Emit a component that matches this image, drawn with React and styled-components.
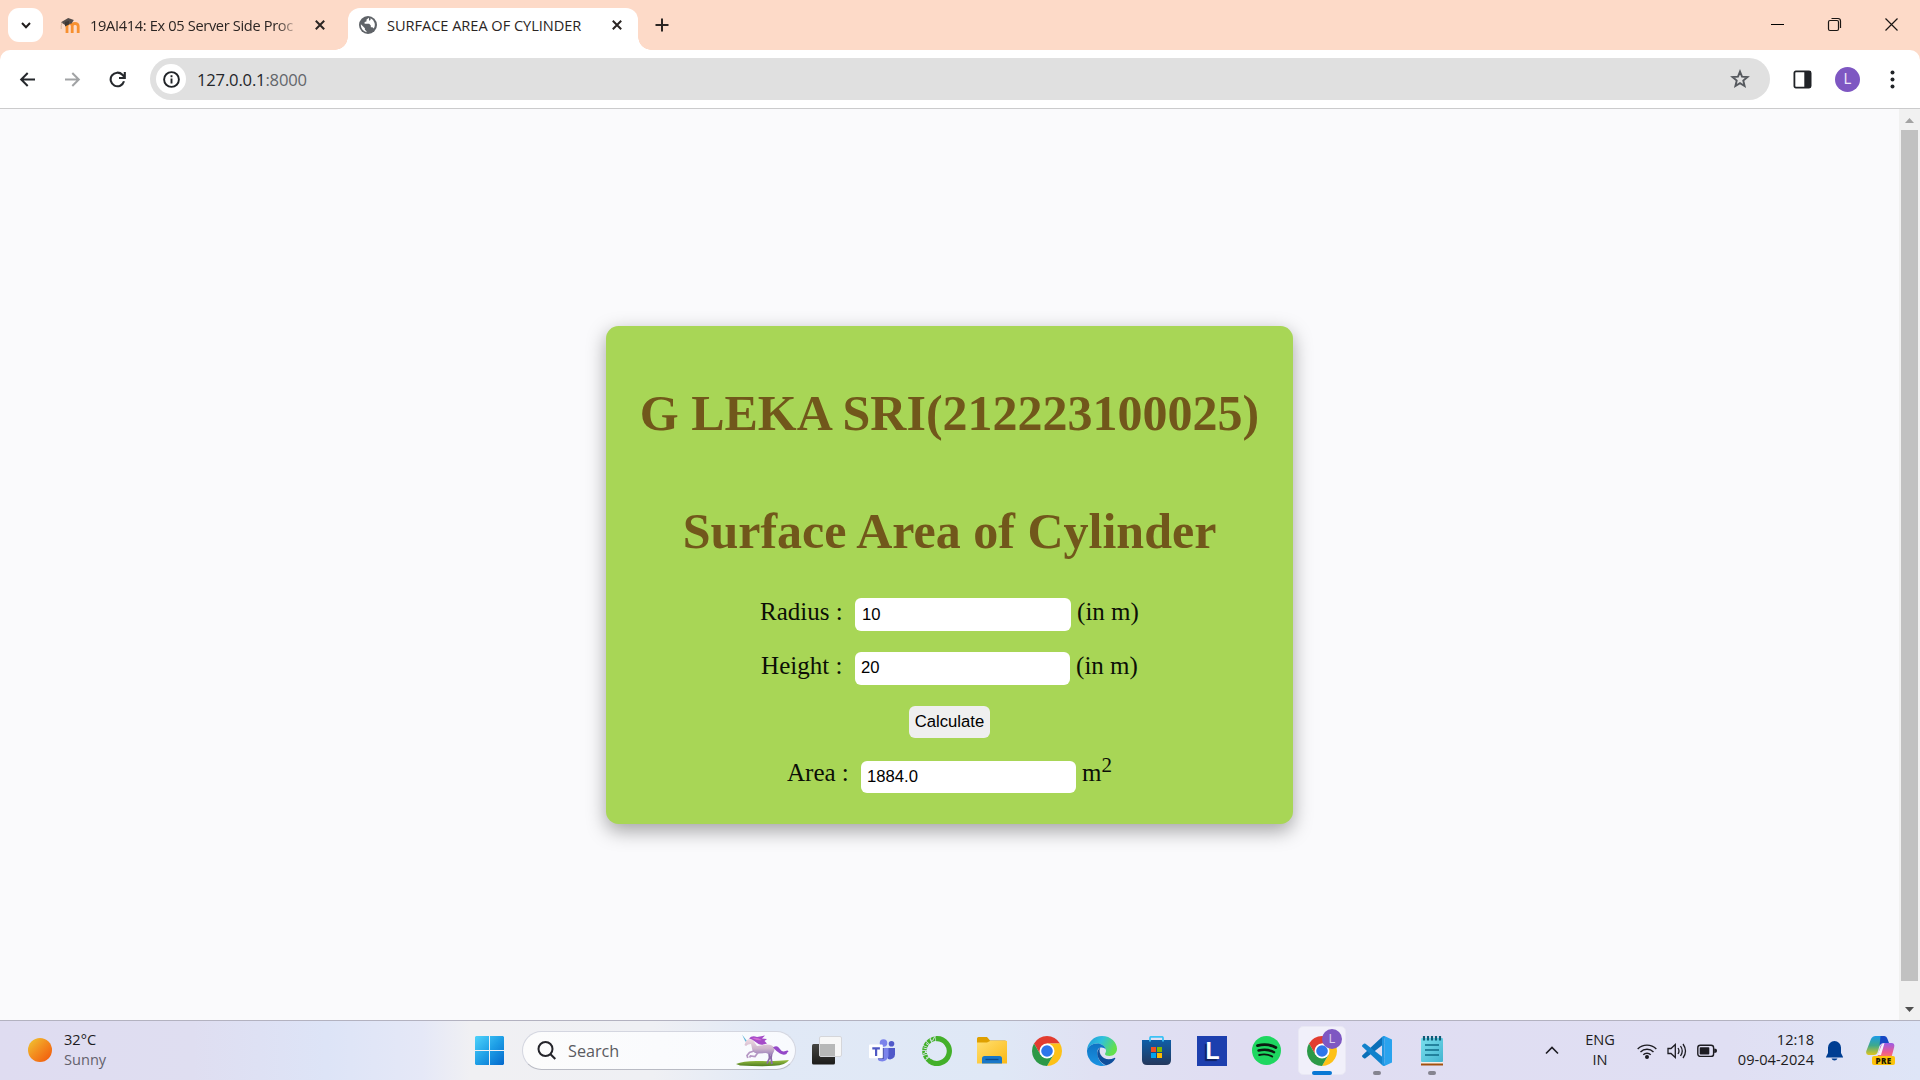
import React from "react";
import styled, { createGlobalStyle, css } from "styled-components";

const Global = createGlobalStyle`
  * { box-sizing: border-box; }
  html, body { margin: 0; padding: 0; background: #fafafc; overflow: hidden; }
  svg { display: block; flex: none; }
`;

const ui = `"Open Sans", "Noto Sans", sans-serif`;

const Screen = styled.div`
  width: 1920px;
  height: 1080px;
  display: flex;
  flex-direction: column;
  font-family: ${ui};
  overflow: hidden;
`;

/* ---------- tab strip ---------- */
const TabStrip = styled.div`
  height: 50px;
  flex: none;
  display: flex;
  align-items: flex-start;
  background: #fddac8;
`;
const TabSearch = styled.div`
  width: 35px;
  height: 34px;
  margin: 8px 0 0 8px;
  border-radius: 11px;
  background: #fff;
  display: flex;
  align-items: center;
  justify-content: center;
`;
const Tab = styled.div`
  position: relative;
  height: 42px;
  margin-top: 8px;
  width: ${(p) => p.$width}px;
  padding-left: ${(p) => p.$pad}px;
  padding-right: ${(p) => p.$right}px;
  padding-bottom: 8px;
  display: flex;
  align-items: center;
  ${(p) =>
    p.$active &&
    css`
      background: #fff;
      border-radius: 12px 12px 0 0;
      &::before,
      &::after {
        content: "";
        position: absolute;
        bottom: 0;
        width: 13px;
        height: 13px;
      }
      &::before {
        left: -13px;
        background: radial-gradient(circle at 0 0, transparent 12.5px, #fff 13px);
      }
      &::after {
        right: -13px;
        background: radial-gradient(circle at 100% 0, transparent 12.5px, #fff 13px);
      }
    `}
`;
const TabTitle = styled.span`
  flex: 1;
  margin-left: ${(p) => p.$gap}px;
  margin-right: ${(p) => p.$after}px;
  overflow: hidden;
  white-space: nowrap;
  font-size: 14.6px;
  line-height: 22px;
  letter-spacing: ${(p) => p.$track}px;
  color: #2b2523;
  ${(p) => p.$fade && css`mask-image: linear-gradient(to right, #000 90%, rgba(0, 0, 0, 0.15));`}
`;
const NewTab = styled.div`
  margin: 18px 0 0 17px;
`;
const WindowButtons = styled.div`
  margin: 17px 21px 0 auto;
  display: flex;
  gap: 42px;
`;

/* ---------- toolbar ---------- */
const ToolbarBack = styled.div`
  flex: none;
  background: #fddac8;
`;
const Toolbar = styled.div`
  height: 59px;
  background: #fff;
  border-radius: 10px 10px 0 0;
  border-bottom: 1px solid #cbcbcc;
  display: flex;
  align-items: center;
  padding: 0 20px 0 19px;
`;
const NavButtons = styled.div`
  display: flex;
  gap: 28px;
  width: 131px;
`;
const AddressBar = styled.div`
  width: 1620px;
  height: 42px;
  border-radius: 21px;
  background: #e0e0e0;
  display: flex;
  align-items: center;
  padding: 0 20px 0 6px;
`;
const SiteInfo = styled.div`
  width: 30px;
  height: 30px;
  border-radius: 50%;
  background: #fff;
  display: flex;
  align-items: center;
  justify-content: center;
`;
const Url = styled.span`
  flex: 1;
  margin-left: 11px;
  font-size: 16.6px;
  letter-spacing: -0.18px;
  color: #24262a;
`;
const Port = styled.span`
  color: #63666b;
`;
const ToolbarActions = styled.div`
  flex: 1;
  display: flex;
  align-items: center;
  padding: 0 5px 0 23px;
`;
const Avatar = styled.div`
  width: 25px;
  height: 25px;
  margin: 0 auto 0 23px;
  border-radius: 50%;
  background: #7e57c2;
  color: #efe8fa;
  font: 14px/25px Roboto, sans-serif;
  text-align: center;
`;

/* ---------- page ---------- */
const Viewport = styled.div`
  flex: 1;
  display: flex;
  background: #fafafc;
`;
const Page = styled.main`
  flex: 1;
  display: flex;
  justify-content: center;
  padding-top: 217px;
`;
const Card = styled.section`
  width: 687px;
  height: 498px;
  padding-top: 58px;
  border-radius: 12.5px;
  background: #a8d656;
  box-shadow: 0 6.25px 18.75px rgba(0, 0, 0, 0.35);
  display: flex;
  flex-direction: column;
  align-items: center;
  font-family: "Liberation Serif", serif;
`;
const Heading = styled.h1`
  margin: 0 0 ${(p) => p.$below}px;
  font-size: 50px;
  line-height: 58px;
  font-weight: 700;
  color: #71571b;
  white-space: nowrap;
`;
const Row = styled.div`
  display: flex;
  align-items: flex-start;
  justify-content: center;
  height: ${(p) => p.$height}px;
  margin-bottom: 21px;
`;
const Label = styled.label`
  width: ${(p) => p.$width}px;
  font-size: 25px;
  line-height: ${(p) => p.$line || 27}px;
  color: #0c0f06;
  white-space: nowrap;
`;
const Field = styled.input`
  width: ${(p) => p.$width}px;
  height: 100%;
  border: 0;
  border-radius: 6px;
  outline: none;
  padding: 0 6px ${(p) => p.$lift || 0}px ${(p) => p.$inset || 6}px;
  background: #fff;
  color: #000;
  font: 16.67px "Liberation Sans", sans-serif;
`;
const Unit = styled.span`
  margin-left: 6px;
  font-size: 25px;
  line-height: ${(p) => p.$line || 27}px;
  color: #0c0f06;
`;
const Power = styled.sup`
  font-size: 21px;
  line-height: 0;
  vertical-align: 9px;
`;
const Calculate = styled.button`
  width: 81px;
  height: 32px;
  border: 0;
  padding: 0;
  margin: 0 0 23px;
  border-radius: 6px;
  background: #efefef;
  color: #000;
  font: 16.67px "Liberation Sans", sans-serif;
`;

const Scrollbar = styled.div`
  width: 21px;
  background: #f1f1f1;
  display: flex;
  flex-direction: column;
  align-items: center;
`;
const ScrollArrow = styled.div`
  width: 21px;
  height: ${(p) => p.$height}px;
  padding: ${(p) => p.$pad}px 0 0 6px;
`;
const Thumb = styled.div`
  width: 17px;
  height: 851px;
  background: #c1c1c1;
`;

/* ---------- taskbar ---------- */
const Taskbar = styled.footer`
  height: 60px;
  flex: none;
  border-top: 1px solid #b3b2c0;
  display: flex;
  align-items: center;
  padding: 0 25px 0 28px;
  background: linear-gradient(
    90deg,
    #dfdcf1 0%,
    #dfdef1 10%,
    #dde4f7 17%,
    #e5e8f7 22%,
    #f0f0f3 24.5%,
    #eff0f4 34%,
    #e1e9f6 40%,
    #dfe8f6 52%,
    #e0e1f3 57%,
    #e0ddf2 65%,
    #e0dff3 90%,
    #dfe4f6 98%,
    #dee5f7 100%
  );
`;
const Weather = styled.div`
  display: flex;
  align-items: center;
  width: 447px;
  height: 59px;
`;
const Sun = styled.div`
  width: 24px;
  height: 24px;
  margin: -2px 12px 0 0;
  border-radius: 50%;
  background: linear-gradient(135deg, #f0c030 8%, #f39020 45%, #f26410 85%);
`;
const Lines = styled.div`
  display: flex;
  flex-direction: column;
  width: ${(p) => p.$width || "auto"};
  text-align: ${(p) => p.$align || "left"};
  font-size: 14.6px;
  line-height: 20px;
  color: #1d1c22;
  white-space: nowrap;
  padding-bottom: 4px;
`;
const Muted = styled.span`
  color: #63616c;
`;
const Search = styled.div`
  width: 274px;
  height: 39px;
  margin: 0 3px 0 18px;
  border-radius: 20px;
  border: 1px solid #d4d6e0;
  border-bottom-color: #b9bbc4;
  background: linear-gradient(90deg, #fcfcfc, #f8fafe);
  display: flex;
  align-items: center;
  padding: 0 5px 0 14px;
`;
const SearchText = styled.span`
  flex: 1;
  margin-left: 12px;
  font-size: 16.2px;
  color: #5a5a60;
`;
const Apps = styled.div`
  display: flex;
`;
const AppSlot = styled.div`
  position: relative;
  width: 55px;
  height: 49px;
  display: flex;
  align-items: center;
  justify-content: center;
`;
const ActiveTile = styled.div`
  width: 48px;
  height: 49px;
  border-radius: 5px;
  border: 1px solid #e9e8f4;
  background: #f1f0fa;
  display: flex;
  align-items: center;
  justify-content: center;
`;
const Badge = styled.div`
  position: absolute;
  left: 28px;
  top: 3px;
  width: 20px;
  height: 20px;
  border-radius: 50%;
  background: #7e57c2;
  color: #d9ccf0;
  font: 12px/20px Roboto, sans-serif;
  text-align: center;
`;
const Marker = styled.div`
  position: absolute;
  bottom: 0;
  width: ${(p) => (p.$active ? 20 : 8)}px;
  height: 4px;
  border-radius: 2px;
  background: ${(p) => (p.$active ? "#0a78d4" : "#858490")};
`;
const LetterTile = styled.div`
  width: 30px;
  height: 30px;
  background: #1d3fae;
  color: #fff;
  font: 700 23px/30px "Liberation Sans", sans-serif;
  text-align: center;
  text-shadow: -2px 2px 1px #0f2060;
  padding-left: 2px;
`;
const Tray = styled.div`
  margin-left: auto;
  display: flex;
  align-items: center;
`;
const Language = styled(Lines)`
  margin: 0 17px 0 21px;
`;
const Glyphs = styled.div`
  display: flex;
  gap: 10px;
`;
const Bell = styled.div`
  margin: 0 23px 0 12px;
`;
const Copilot = styled.div`
  position: relative;
  width: 29px;
  height: 29px;
`;
const Pre = styled.span`
  position: absolute;
  left: 6px;
  bottom: 0;
  width: 23px;
  height: 9px;
  border-radius: 2px;
  background: #fcc30b;
  color: #221a00;
  font: 800 8px/9px "Open Sans", sans-serif;
  letter-spacing: 0.4px;
  text-align: center;
`;

/* ---------- icons ---------- */
const Cross = () => (
  <svg width="10" height="10" viewBox="0 0 10 10">
    <path d="M.8.8l8.4 8.4M9.2.8L.8 9.2" stroke="#2b2523" strokeWidth="2" />
  </svg>
);
const Moodle = () => (
  <svg width="21" height="17" viewBox="0 0 21 17">
    <path d="M7 16V9Q7 6.500 9.600 6.500T12.200 9V16M12.200 16V9Q12.200 6.500 15 6.500T18.200 9V16" fill="none" stroke="#f7902f" strokeWidth="2.800" />
    <path d="M1 5.200L8.200 1l5.600 2L11.600 6.600 5 8z" fill="#544c4a" />
    <path d="M5 5v4.500l4-2V4z" fill="#3e3836" />
    <path d="M2 5.600Q.8 8.500 1.200 12" stroke="#d9b49a" fill="none" />
  </svg>
);
const Globe = () => (
  <svg width="18" height="18" viewBox="0 0 18 18">
    <circle cx="9" cy="9" r="9" fill="#5f6368" />
    <path d="M10 1.800L7.600 3.600 7.400 5.500 5.600 6v1.800h4.600l1.600 1.800v1.600h1.600l1.400 1.300A7.200 7.200 0 0 0 11.600 2.300L11.500 4 10 4.700zM1.900 8.300l4 3.900v1.600l1.600 1.400v1A7.200 7.200 0 0 1 1.900 8.300z" fill="#fff" />
  </svg>
);
const Chrome = () => (
  <svg width="30" height="30" viewBox="0 0 48 48">
    <path d="M3.220 12A24 24 0 0 1 44.780 12H24L13.610 30Z" fill="#e23c30" />
    <path d="M44.780 12A24 24 0 0 1 24 48L34.390 30 24 12Z" fill="#fdc117" />
    <path d="M3.220 12A24 24 0 0 0 24 48L34.390 30H13.610Z" fill="#2c9947" />
    <circle cx="24" cy="24" r="12" fill="#fff" />
    <circle cx="24" cy="24" r="9.300" fill="#2d76ea" />
  </svg>
);
const Windows = () => (
  <svg width="29" height="29" viewBox="0 0 29 29">
    <defs>
      <linearGradient id="win" x1="0" y1="0" x2="29" y2="29" gradientUnits="userSpaceOnUse">
        <stop stopColor="#4fd3fb" />
        <stop offset=".5" stopColor="#1e9fe6" />
        <stop offset="1" stopColor="#0468cc" />
      </linearGradient>
    </defs>
    <path d="M1 0h13v14H0V1zM15 0h13l1 1v13H15zM0 15h14v14H1l-1-1zM15 15h14v13l-1 1H15z" fill="url(#win)" />
  </svg>
);
const Unicorn = () => (
  <svg width="54" height="33" viewBox="0 0 54 33">
    <defs>
      <linearGradient id="grass" x1="0" x2="0" y1="0" y2="1">
        <stop stopColor="#9cc242" />
        <stop offset="1" stopColor="#4f7d22" />
      </linearGradient>
      <linearGradient id="body" x1="0" x2="0" y1="0" y2="1">
        <stop stopColor="#efdbe2" />
        <stop offset=".6" stopColor="#cdb4cc" />
        <stop offset="1" stopColor="#9a7fba" />
      </linearGradient>
    </defs>
    <path d="M0 30Q8 26.500 24 27T53 26Q50 31 38 31.800T4 31.500Z" fill="url(#grass)" />
    <path d="M6 .5l5 6.500-1.500.8z" fill="#5fb4d8" />
    <path d="M33 18l.5 6-2.500 5.500M36 17l-1 7 1 6" fill="none" stroke="#8d6cab" strokeWidth="1.800" />
    <path d="M10 7l2.500-2 4 .5 4.500 6.500 10-1.500q6 0 7.500 4 0 4-3.500 6.500l-5-2-8 .5q-4 0-5.500-3l-1.500-6.500-3 .5-2 1.500-1.500-1z" fill="url(#body)" />
    <path d="M18 17l-4.500 1.500-2.500 3 .8 2.500M22 18.500l-3 4-4.500-.5-1 1.500" fill="none" stroke="#b597c4" strokeWidth="1.700" />
    <path d="M13 4.500Q16 1 21 3L29 1.500 26 4.500l5 .5-2.500 2 2.500 2.500q-5 2-8.500.5L16 5.500z" fill="#a54bc8" />
    <path d="M16 4q5-1 10 2-4 1-8-1z" fill="#d16ad4" />
    <path d="M37 13.500q4-3 6.500 1t6 2.500q2.500-1 3 .5-1.500.5-2 2.500-3 1.500-6.500-.5T37 13.500z" fill="#9448c8" />
  </svg>
);
const TaskView = () => (
  <svg width="30" height="29" viewBox="0 0 30 29">
    <defs>
      <linearGradient id="tv" x1="0" x2="0" y1="0" y2="1">
        <stop stopColor="#454543" />
        <stop offset="1" stopColor="#1c1c1a" />
      </linearGradient>
    </defs>
    <rect y="8" width="23" height="20.500" rx="1.500" fill="url(#tv)" />
    <rect x="7.500" y=".5" width="22" height="20" rx="1.500" fill="#f7f7f7" stroke="#d5d6da" />
    <path d="M8 8h15v12H8z" fill="#b7b8b8" />
  </svg>
);
const Teams = () => (
  <svg width="26" height="24" viewBox="0 0 26 24">
    <circle cx="14.500" cy="4" r="3.800" fill="#7b83eb" />
    <circle cx="22.500" cy="4.800" r="2.800" fill="#5059c9" />
    <path d="M17 9h9v6.500a5 5 0 0 1-7 4.500z" fill="#5059c9" />
    <path d="M8 9h11.500v8A6.500 6.500 0 0 1 9 21z" fill="#7b83eb" />
    <path d="M10 9h5v11h-6z" fill="#40478f" opacity=".6" />
    <rect y="5.500" width="13.800" height="13.800" rx="1" fill="#fff" />
    <path d="M3.300 8.300h7.600v2.100H8.200v6.700H6v-6.700H3.300z" fill="#4f58c4" />
  </svg>
);
const Anaconda = () => (
  <svg width="30" height="30" viewBox="0 0 30 30">
    <path d="M14 2.700A12.400 12.400 0 1 1 7.500 25" fill="none" stroke="#43b02a" strokeWidth="5.200" />
    <path d="M8 25.400A12.400 12.400 0 0 1 14.500 2.700" fill="none" stroke="#43b02a" strokeWidth="4.600" strokeDasharray="3.600 .7" />
    <path d="M1 18l5-3M1.500 12l4 1M4 7.500l4 2.500M8 3l2 4M12.500 1l-2 4M4 22l4-2M3 15l3 3" stroke="#e1e9f6" strokeWidth=".9" />
  </svg>
);
const Folder = () => (
  <svg width="30" height="27" viewBox="0 0 30 27">
    <defs>
      <linearGradient id="fold" x1="0" y1="0" x2="1" y2="1">
        <stop stopColor="#ffdf70" />
        <stop offset="1" stopColor="#fbb916" />
      </linearGradient>
    </defs>
    <path d="M0 1.500Q0 0 1.500 0H10l3 3.500h15q2 0 2 1.500v5H0z" fill="#dfa000" />
    <path d="M0 5.500h10l3-1.500h17v22.500H0z" fill="url(#fold)" />
    <path d="M5 26.500v-5q0-2.500 2.500-2.500h15q2.500 0 2.500 2.500v5z" fill="#1877c8" />
    <path d="M8.500 22.500h13" stroke="#0c4b8c" strokeWidth="1.300" />
  </svg>
);
const Edge = () => (
  <svg width="30" height="30" viewBox="0 0 30 30">
    <defs>
      <linearGradient id="eTop" x1="0" x2="1" y1="0" y2=".4">
        <stop stopColor="#1f97dc" />
        <stop offset=".5" stopColor="#30c1dc" />
        <stop offset="1" stopColor="#62e04c" />
      </linearGradient>
      <linearGradient id="eLow" x1="0" x2="0" y1="0" y2="1">
        <stop stopColor="#0f73c4" />
        <stop offset="1" stopColor="#1a93e2" />
      </linearGradient>
    </defs>
    <path d="M0 14.500A15 15 0 0 1 15 0c9 0 15 6.500 15 12.800 0 4.700-3.800 7.200-7.500 7.200-3 0-4.500-1-4.500-2 0-.8 1-1.300 1-3.300C19 11 15 7.500 10 7.500 5 7.500 1 10.800 0 14.500z" fill="url(#eTop)" />
    <path d="M0 14.500C1 10.500 5 7.500 10 7.500c4.500 0 8 2.500 8.900 6-1-1.300-2.600-2-4.400-2-4 0-4.500 4-4 7C11.200 25 16 29 19.500 29.300A15 15 0 0 1 0 14.500z" fill="url(#eLow)" />
    <path d="M13.500 11.600C11 13 10 16 10.300 18.500c.9 5.500 4.900 9.500 9.200 10.800 4-.9 7.300-3.700 8.800-6.800.2-.7-.4-1-1-.6-5.300 2.600-11.300 1.300-13.800-3.400-1.300-2.500-1.200-5.200 0-6.900z" fill="#0f4f9c" />
  </svg>
);
const Store = () => (
  <svg width="29" height="29" viewBox="0 0 29 29">
    <defs>
      <linearGradient id="st" x1="0" x2="0" y1="0" y2="1">
        <stop stopColor="#0f5ea8" />
        <stop offset="1" stopColor="#24385c" />
      </linearGradient>
    </defs>
    <path d="M8 5.500V2q0-1.200 1.200-1.200h10.600q1.200 0 1.200 1.200v3.500" fill="none" stroke="#3cc2f5" strokeWidth="1.800" />
    <path d="M0 4h29v20q0 5-5 5H5q-5 0-5-5z" fill="url(#st)" />
    <path d="M8 5.500V4M21 5.500V4" stroke="#3cc2f5" strokeWidth="1.800" />
    <path d="M9 11h5v5H9z" fill="#f25022" />
    <path d="M15 11h5v5h-5z" fill="#7fba00" />
    <path d="M9 17h5v5H9z" fill="#00a4ef" />
    <path d="M15 17h5v5h-5z" fill="#ffb900" />
  </svg>
);
const Spotify = () => (
  <svg width="29" height="29" viewBox="0 0 29 29">
    <circle cx="14.500" cy="14.500" r="14.500" fill="#1ed760" />
    <path d="M5.500 9.600q10-2.600 18.300 1.900" stroke="#0b1a10" strokeWidth="2.900" fill="none" strokeLinecap="round" />
    <path d="M6.500 14.500q8.600-2.200 15.600 1.700" stroke="#0b1a10" strokeWidth="2.400" fill="none" strokeLinecap="round" />
    <path d="M7.200 19q7.400-1.700 13 1.500" stroke="#0b1a10" strokeWidth="1.900" fill="none" strokeLinecap="round" />
  </svg>
);
const VSCode = () => (
  <svg width="30" height="30" viewBox="0 0 30 30">
    <path d="M22.400 7.500L3.500 22.300q-.9.600-1.600 0L.4 20.900q-.7-.8 0-1.600L20 1z" fill="#0a6fb8" />
    <path d="M22.400 22.500L3.500 7.700q-.9-.6-1.600 0L.4 9.100q-.7.800 0 1.600L20 29z" fill="#1282cc" />
    <path d="M22.400 0L30 3.500v23L22.400 30Q20.800 30 20 28.800l2.400-1.300V2.500L20 1.200Q20.800 0 22.400 0z" fill="#2aa3ee" />
    <path d="M22.400 0v30L20 28.900V1.100z" fill="#1f94e0" />
  </svg>
);
const Notepad = () => (
  <svg width="22" height="30" viewBox="0 0 22 30">
    <defs>
      <linearGradient id="np" x1="0" x2="1" y1="0" y2="1">
        <stop stopColor="#7ae0ee" />
        <stop offset="1" stopColor="#44b4d0" />
      </linearGradient>
    </defs>
    <path d="M0 26h22v3.500H0z" fill="#a3500e" />
    <path d="M0 25.500h22v2H0z" fill="#f5efe8" />
    <rect y="2" width="22" height="24" rx="1" fill="url(#np)" />
    <path d="M3 0v4.500M7 0v4.500M11 0v4.500M15 0v4.500M19 0v4.500" stroke="#0e5c78" strokeWidth="2.200" />
    <path d="M4 9h14M4 14h14M4 19h14" stroke="#106b88" strokeWidth="1.600" />
  </svg>
);

const taskbarApps = [
  { id: "taskview", icon: <TaskView /> },
  { id: "teams", icon: <Teams /> },
  { id: "anaconda", icon: <Anaconda /> },
  { id: "explorer", icon: <Folder /> },
  { id: "chrome", icon: <Chrome /> },
  { id: "edge", icon: <Edge /> },
  { id: "store", icon: <Store /> },
  { id: "lenovo", icon: <LetterTile>L</LetterTile> },
  { id: "spotify", icon: <Spotify /> },
  { id: "chrome-profile", icon: <ActiveTile><Chrome /></ActiveTile>, badge: "L", state: "active" },
  { id: "vscode", icon: <VSCode />, state: "open" },
  { id: "notepad", icon: <Notepad />, state: "open" },
];

export default function App() {
  return (
    <Screen>
      <Global />
      <TabStrip>
        <TabSearch>
          <svg width="10" height="7" viewBox="0 0 10 7">
            <path d="M1 1l4 4.200L9 1" fill="none" stroke="#201c1b" strokeWidth="2" />
          </svg>
        </TabSearch>
        <Tab $width={305} $pad={17} $right={23}>
          <Moodle />
          <TabTitle $gap={9} $after={18} $track={-0.33} $fade>19AI414: Ex 05 Server Side Proc</TabTitle>
          <Cross />
        </Tab>
        <Tab $width={290} $pad={11} $right={16} $active>
          <Globe />
          <TabTitle $gap={10} $after={10} $track={-0.04}>SURFACE AREA OF CYLINDER</TabTitle>
          <Cross />
        </Tab>
        <NewTab>
          <svg width="14" height="14" viewBox="0 0 14 14">
            <path d="M7 .5v13M.5 7h13" stroke="#2b2523" strokeWidth="2" />
          </svg>
        </NewTab>
        <WindowButtons>
          <svg width="15" height="15" viewBox="0 0 15 15"><path d="M1 7.500h13" stroke="#000" /></svg>
          <svg width="15" height="15" viewBox="0 0 15 15" fill="none" stroke="#1a1614" strokeWidth="1.200">
            <rect x="1.500" y="3.500" width="10" height="10" rx="1.500" />
            <path d="M4.500 1.500h6.500q2.500 0 2.500 2.500v7" />
          </svg>
          <svg width="15" height="15" viewBox="0 0 15 15"><path d="M1.500 1.500l12 12M13.500 1.500l-12 12" stroke="#1a1614" strokeWidth="1.200" /></svg>
        </WindowButtons>
      </TabStrip>

      <ToolbarBack>
        <Toolbar>
          <NavButtons>
            <svg width="17" height="17" viewBox="0 0 17 17" fill="none" stroke="#25282c" strokeWidth="2"><path d="M16 8.500H2.500M8.700 2L2.200 8.500l6.500 6.500" /></svg>
            <svg width="17" height="17" viewBox="0 0 17 17" fill="none" stroke="#a1a3a5" strokeWidth="2"><path d="M1 8.500h13.500M8.300 2l6.500 6.500L8.300 15" /></svg>
            <svg width="17" height="17" viewBox="0 0 17 17" fill="none" stroke="#25282c" strokeWidth="2.100"><path d="M15 10.300A6.800 6.800 0 1 1 13.400 3.800L15.500 6M15.800 1v6H10" /></svg>
          </NavButtons>
          <AddressBar>
            <SiteInfo>
              <svg width="17" height="17" viewBox="0 0 17 17" fill="none" stroke="#202327" strokeWidth="1.900"><circle cx="8.500" cy="8.500" r="7.400" /><path d="M8.500 7.500v5M8.500 4.300v2" /></svg>
            </SiteInfo>
            <Url>127.0.0.1<Port>:8000</Port></Url>
            <svg width="20" height="20" viewBox="0 0 20 20" fill="none" stroke="#56595e" strokeWidth="1.900">
              <path d="M10 2.600l2 5.100 5.500.4-4.200 3.500 1.300 5.400-4.600-2.900-4.600 2.900 1.300-5.400L2.500 8.100 8 7.700z" />
            </svg>
          </AddressBar>
          <ToolbarActions>
            <svg width="19" height="19" viewBox="0 0 19 19">
              <rect x="1.400" y="1.400" width="16.200" height="16.200" rx="1.500" fill="none" stroke="#202327" strokeWidth="1.800" />
              <path d="M11.300 1.500h6.200v16h-6.200z" fill="#202327" />
            </svg>
            <Avatar>L</Avatar>
            <svg width="5" height="19" viewBox="0 0 5 19" fill="#202327"><circle cx="2.500" cy="2.500" r="2" /><circle cx="2.500" cy="9.500" r="2" /><circle cx="2.500" cy="16.500" r="2" /></svg>
          </ToolbarActions>
        </Toolbar>
      </ToolbarBack>

      <Viewport>
        <Page>
          <Card>
            <Heading $below={59.5}>G LEKA SRI(212223100025)</Heading>
            <Heading $below={38.5}>Surface Area of Cylinder</Heading>
            <Row $height={33}>
              <Label $width={95}>Radius :</Label>
              <Field $width={216} $inset={7} defaultValue="10" />
              <Unit>(in m)</Unit>
            </Row>
            <Row $height={33}>
              <Label $width={94}>Height :</Label>
              <Field $width={215} $lift={2} defaultValue="20" />
              <Unit>(in m)</Unit>
            </Row>
            <Calculate>Calculate</Calculate>
            <Row $height={32}>
              <Label $width={74} $line={23}>Area :</Label>
              <Field $width={215} defaultValue="1884.0" />
              <Unit $line={23}>m<Power>2</Power></Unit>
            </Row>
          </Card>
        </Page>
        <Scrollbar>
          <ScrollArrow $height={21} $pad={9}>
            <svg width="9" height="5" viewBox="0 0 9 5"><path d="M0 5L4.500 0 9 5z" fill="#a3a3a3" /></svg>
          </ScrollArrow>
          <Thumb />
          <ScrollArrow $height={39} $pad={26}>
            <svg width="9" height="5" viewBox="0 0 9 5"><path d="M0 0l4.500 5L9 0z" fill="#505050" /></svg>
          </ScrollArrow>
        </Scrollbar>
      </Viewport>

      <Taskbar>
        <Weather>
          <Sun />
          <Lines>
            <span>32°C</span>
            <Muted>Sunny</Muted>
          </Lines>
        </Weather>
        <Windows />
        <Search>
          <svg width="19" height="19" viewBox="0 0 19 19" fill="none" stroke="#24242a" strokeWidth="2"><circle cx="8.500" cy="8" r="7" /><path d="M13.300 13l5 5" /></svg>
          <SearchText>Search</SearchText>
          <Unicorn />
        </Search>
        <Apps>
          {taskbarApps.map((app) => (
            <AppSlot key={app.id}>
              {app.icon}
              {app.badge && <Badge>{app.badge}</Badge>}
              {app.state && <Marker $active={app.state === "active"} />}
            </AppSlot>
          ))}
        </Apps>
        <Tray>
          <svg width="14" height="9" viewBox="0 0 14 9"><path d="M1 7.500l6-6 6 6" fill="none" stroke="#1d1c22" strokeWidth="1.600" /></svg>
          <Language $width="40px" $align="center">
            <span>ENG</span>
            <span>IN</span>
          </Language>
          <Glyphs>
            <svg width="20" height="16" viewBox="0 0 20 16" fill="none" stroke="#1d1c22" strokeWidth="1.400">
              <path d="M.7 6a13 13 0 0 1 18.600 0M3.500 9a9.200 9.200 0 0 1 13 0M6.300 11.800a5.200 5.200 0 0 1 7.400 0" />
              <circle cx="10" cy="14" r="1.300" fill="#1d1c22" />
            </svg>
            <svg width="20" height="16" viewBox="0 0 20 16" fill="none" stroke="#1d1c22" strokeWidth="1.300">
              <path d="M1 5.500h3L8.300 1.500v13L4 10.500H1z" />
              <path d="M11 5q2 3 0 6M13.500 3q3.500 5 0 10M16 1q5 7 0 14" />
            </svg>
            <svg width="20" height="16" viewBox="0 0 20 16">
              <rect x=".8" y="2.200" width="15.800" height="11.200" rx="2.500" fill="none" stroke="#1d1c22" strokeWidth="1.400" />
              <rect x="2.700" y="4.200" width="9.600" height="7.400" rx=".8" fill="#1d1c22" />
              <path d="M17.200 5.600q2.800 0 2.800 2.200t-2.800 2.200z" fill="#1d1c22" />
            </svg>
          </Glyphs>
          <Lines $width="97px" $align="right">
            <span>12:18</span>
            <span>09-04-2024</span>
          </Lines>
          <Bell>
            <svg width="17" height="20" viewBox="0 0 17 20" fill="#003e92">
              <path d="M8.500 0a6.500 6.500 0 0 1 6.500 6.500v5.500l2 4v.5H0V16l2-4V6.500A6.500 6.500 0 0 1 8.500 0zM5.500 17.500h6q-.8 2-3 2t-3-2z" />
            </svg>
          </Bell>
          <Copilot>
            <svg width="29" height="24" viewBox="0 0 29 24">
              <defs>
                <linearGradient id="cpA" x1="0" x2="0" y1="0" y2="1">
                  <stop stopColor="#1a9be8" />
                  <stop offset=".5" stopColor="#3fa98c" />
                  <stop offset="1" stopColor="#e0c61c" />
                </linearGradient>
                <linearGradient id="cpB" x1="0" x2="0" y1="0" y2="1">
                  <stop stopColor="#9a5ce6" />
                  <stop offset=".6" stopColor="#f05a8c" />
                  <stop offset="1" stopColor="#fa8a50" />
                </linearGradient>
              </defs>
              <path d="M5 3Q6.500 0 9.500 0H19q-3 1-4 5l-3 10q-1 4-4 4H2.500Q-.5 19 .3 15z" fill="url(#cpA)" />
              <path d="M14.500 0H18q2.500 0 3.500 3l1.500 4h-5q-3 0-4.500 3z" fill="#1648c4" />
              <path d="M18 7h7.500q3.500 0 2.700 4L25 23H7q4-.5 5-4l2.500-9Q16.300 7 18 7z" fill="url(#cpB)" />
              <path d="M15.500 9.500Q16.300 7 18.500 7l-3.500 12h-3.500z" fill="#f6f2fb" />
            </svg>
            <Pre>PRE</Pre>
          </Copilot>
        </Tray>
      </Taskbar>
    </Screen>
  );
}
